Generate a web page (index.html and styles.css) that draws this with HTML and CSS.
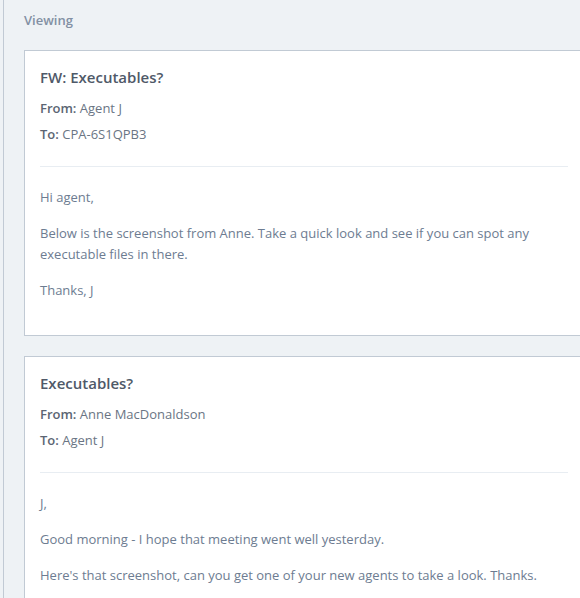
FILE: index.html
```html
<!DOCTYPE html>
<html>
<head>
<meta charset="utf-8">
<link rel="stylesheet" href="styles.css">
</head>
<body>
<div class="page">
  <div class="section-title">Viewing</div>
  <div class="cards">
    <div class="card">
      <h2 class="subject">FW: Executables?</h2>
      <div class="meta"><b>From:</b> Agent J</div>
      <div class="meta"><b>To:</b> CPA-6S1QPB3</div>
      <hr class="divider">
      <div class="body">
        <p>Hi agent,</p>
        <p>Below is the screenshot from Anne. Take a quick look and see if you can spot any executable files in there.</p>
        <p>Thanks, J</p>
      </div>
    </div>
    <div class="card">
      <h2 class="subject">Executables?</h2>
      <div class="meta"><b>From:</b> Anne MacDonaldson</div>
      <div class="meta"><b>To:</b> Agent J</div>
      <hr class="divider">
      <div class="body">
        <p>J,</p>
        <p>Good morning - I hope that meeting went well yesterday.</p>
        <p>Here's that screenshot, can you get one of your new agents to take a look. Thanks.</p>
      </div>
    </div>
  </div>
</div>
</body>
</html>
```
FILE: styles.css
```css
html, body {
  margin: 0;
  padding: 0;
  background: #eef2f5;
  overflow: hidden;
  font-family: "Open Sans", "Noto Sans", sans-serif;
  font-size: 13px;
  color: #6d7c91;
}
.page {
  margin-left: 3px;
  border-left: 1px solid #c1cad4;
  padding: 10px 0 0 20px;
  min-height: 600px;
}
.section-title {
  line-height: 20px;
  font-weight: 600;
  color: #8290a3;
  margin: 0 0 20px 0;
}
.cards {
  display: flex;
  flex-direction: column;
  gap: 20px;
}
.card {
  background: #fff;
  border: 1px solid #c1cad4;
  width: 528px;
  padding: 16px 15px 34px 15px;
}
.subject {
  margin: 0;
  font-size: 15px;
  line-height: 20px;
  font-weight: 600;
  color: #4f5968;
}
.meta {
  line-height: 20px;
  color: #6a7584;
  margin-top: 6px;
}
.meta:first-of-type { margin-top: 11px; }
.meta b { font-weight: 600; color: #5b6573; }
.divider {
  border: 0;
  border-top: 1px solid #e8edf2;
  margin: 22px 0 20px 0;
}
.body p {
  margin: 15px 0 0 0;
  line-height: 21px;
}
.body p:first-child { margin-top: 0; }
```
